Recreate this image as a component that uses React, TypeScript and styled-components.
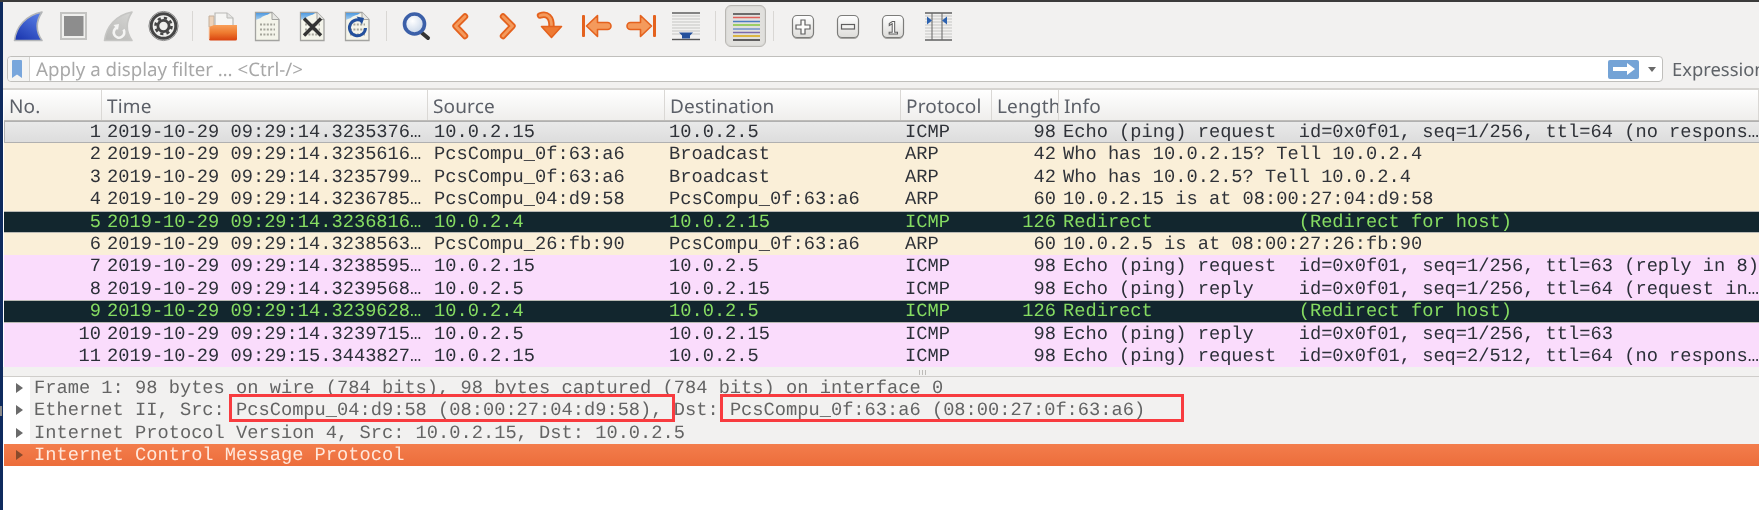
import React from 'react';
import styled, { createGlobalStyle } from 'styled-components';

const GlobalStyle = createGlobalStyle`
  html, body {
    margin: 0;
    padding: 0;
    background: #fff;
  }
  * {
    box-sizing: border-box;
  }
`;

type RowKind = 'selected' | 'arp' | 'redirect' | 'icmp';

interface PacketRow {
  no: number;
  time: string;
  source: string;
  destination: string;
  protocol: string;
  length: number;
  info: string;
  kind: RowKind;
}

const packets: PacketRow[] = [
  { no: 1, time: '2019-10-29 09:29:14.3235376…', source: '10.0.2.15', destination: '10.0.2.5', protocol: 'ICMP', length: 98, info: 'Echo (ping) request  id=0x0f01, seq=1/256, ttl=64 (no respons…', kind: 'selected' },
  { no: 2, time: '2019-10-29 09:29:14.3235616…', source: 'PcsCompu_0f:63:a6', destination: 'Broadcast', protocol: 'ARP', length: 42, info: 'Who has 10.0.2.15? Tell 10.0.2.4', kind: 'arp' },
  { no: 3, time: '2019-10-29 09:29:14.3235799…', source: 'PcsCompu_0f:63:a6', destination: 'Broadcast', protocol: 'ARP', length: 42, info: 'Who has 10.0.2.5? Tell 10.0.2.4', kind: 'arp' },
  { no: 4, time: '2019-10-29 09:29:14.3236785…', source: 'PcsCompu_04:d9:58', destination: 'PcsCompu_0f:63:a6', protocol: 'ARP', length: 60, info: '10.0.2.15 is at 08:00:27:04:d9:58', kind: 'arp' },
  { no: 5, time: '2019-10-29 09:29:14.3236816…', source: '10.0.2.4', destination: '10.0.2.15', protocol: 'ICMP', length: 126, info: 'Redirect             (Redirect for host)', kind: 'redirect' },
  { no: 6, time: '2019-10-29 09:29:14.3238563…', source: 'PcsCompu_26:fb:90', destination: 'PcsCompu_0f:63:a6', protocol: 'ARP', length: 60, info: '10.0.2.5 is at 08:00:27:26:fb:90', kind: 'arp' },
  { no: 7, time: '2019-10-29 09:29:14.3238595…', source: '10.0.2.15', destination: '10.0.2.5', protocol: 'ICMP', length: 98, info: 'Echo (ping) request  id=0x0f01, seq=1/256, ttl=63 (reply in 8)', kind: 'icmp' },
  { no: 8, time: '2019-10-29 09:29:14.3239568…', source: '10.0.2.5', destination: '10.0.2.15', protocol: 'ICMP', length: 98, info: 'Echo (ping) reply    id=0x0f01, seq=1/256, ttl=64 (request in…', kind: 'icmp' },
  { no: 9, time: '2019-10-29 09:29:14.3239628…', source: '10.0.2.4', destination: '10.0.2.5', protocol: 'ICMP', length: 126, info: 'Redirect             (Redirect for host)', kind: 'redirect' },
  { no: 10, time: '2019-10-29 09:29:14.3239715…', source: '10.0.2.5', destination: '10.0.2.15', protocol: 'ICMP', length: 98, info: 'Echo (ping) reply    id=0x0f01, seq=1/256, ttl=63', kind: 'icmp' },
  { no: 11, time: '2019-10-29 09:29:15.3443827…', source: '10.0.2.15', destination: '10.0.2.5', protocol: 'ICMP', length: 98, info: 'Echo (ping) request  id=0x0f01, seq=2/512, ttl=64 (no respons…', kind: 'icmp' },
];

const Icon = ({ children }: { children: React.ReactNode }) => (
  <svg width="45" height="46" viewBox="0 0 45 46">{children}</svg>
);

const Fin = ({ id, top, bottom, edge }: { id: string; top: string; bottom: string; edge: string }) => (
  <>
    <defs>
      <linearGradient id={id} x1="0.8" y1="0" x2="0.2" y2="1">
        <stop offset="0" stopColor={top} />
        <stop offset="1" stopColor={bottom} />
      </linearGradient>
    </defs>
    <path d="M8.5 37.5C10 24 20 12 36 9C30 18 29.5 28 36 37.5Z" fill={`url(#${id})`} stroke={edge} strokeWidth="1.6" strokeLinejoin="round" />
  </>
);

const StartIcon = () => (
  <Icon>
    <Fin id="finBlue" top="#5a7fe6" bottom="#1c38b0" edge="#b4b6b8" />
  </Icon>
);

const StopIcon = () => (
  <Icon>
    <rect x="10" y="10" width="25" height="26" fill="#efefed" stroke="#c3c3c1" strokeWidth="2" />
    <rect x="13" y="13" width="19.5" height="20" fill="#8d8d8d" />
  </Icon>
);

const RestartIcon = () => (
  <Icon>
    <Fin id="finGrey" top="#d4d4d2" bottom="#b9b9b7" edge="#c6c6c4" />
    <path d="M27.5 26.5a5.3 5.3 0 1 1-6.5-2" fill="none" stroke="#f4f4f3" strokeWidth="2.6" />
    <path d="M17.5 22l5.5-1-1 6z" fill="#f4f4f3" />
  </Icon>
);

const GearIcon = () => (
  <Icon>
    <circle cx="22.5" cy="23" r="14.6" fill="#efefed" stroke="#8c8c8c" strokeWidth="1" />
    <circle cx="22.5" cy="23" r="12.3" fill="none" stroke="#454545" strokeWidth="3" />
    <circle cx="22.5" cy="23" r="8" fill="none" stroke="#454545" strokeWidth="2.6" strokeDasharray="3.2 3.1" />
    <circle cx="22.5" cy="23" r="5.6" fill="none" stroke="#454545" strokeWidth="2.8" />
  </Icon>
);

const OpenIcon = () => (
  <Icon>
    <defs>
      <linearGradient id="folderFill" x1="0" y1="0" x2="0" y2="1">
        <stop offset="0" stopColor="#f9a05a" />
        <stop offset="0.5" stopColor="#ee7a2f" />
        <stop offset="1" stopColor="#d9420f" />
      </linearGradient>
    </defs>
    <path d="M9 13h5v11H9z" fill="#edd3ba" stroke="#c5b09c" strokeWidth="1" />
    <path d="M15 10h12l6 5v13H15z" fill="#f6f6f4" stroke="#b9b9b6" strokeWidth="1.2" />
    <path d="M27 10v5h6" fill="#e4e4e2" stroke="#b9b9b6" strokeWidth="1" />
    <path d="M9 24l5-2h23v14a1.5 1.5 0 0 1-1.5 1.5H10.5A1.5 1.5 0 0 1 9 36z" fill="url(#folderFill)" />
    <path d="M9 24v12" stroke="#f7d7c0" strokeWidth="1" />
  </Icon>
);

const FileBase = ({ id }: { id: string }) => (
  <>
    <defs>
      <linearGradient id={id} x1="0" y1="0" x2="0" y2="1">
        <stop offset="0" stopColor="#4f9ae0" />
        <stop offset="1" stopColor="#a9d0ee" />
      </linearGradient>
    </defs>
    <path d="M10.5 9.5H27l7 7v21H10.5z" fill="#f4f4ea" stroke="#a3a3a0" strokeWidth="1.3" />
    <path d="M11 10h14c-3 3-7 2-9 5-2 1-4 1-5 2z" fill={`url(#${id})`} />
    <path d="M27 9.5v7h7" fill="#e8e8e4" stroke="#a3a3a0" strokeWidth="1" />
    <g stroke="#a4a49a" strokeWidth="2" strokeDasharray="2 1.4">
      <line x1="15" y1="21.5" x2="30" y2="21.5" />
      <line x1="15" y1="26.5" x2="30" y2="26.5" />
      <line x1="15" y1="31.5" x2="30" y2="31.5" />
    </g>
  </>
);

const FileIcon = () => (
  <Icon>
    <FileBase id="fileA" />
  </Icon>
);

const CloseIcon = () => (
  <Icon>
    <FileBase id="fileB" />
    <path d="M14 15.5L31 32.5M31 15.5L14 32.5" stroke="#333" strokeWidth="3.4" />
  </Icon>
);

const ReloadIcon = () => (
  <Icon>
    <FileBase id="fileC" />
    <path d="M27.5 18.5a8 8 0 1 0 3 6.5" fill="none" stroke="#23509c" strokeWidth="3" />
    <path d="M21.5 13.5l7.5 1.5-2 6.5z" fill="#23509c" />
  </Icon>
);

const SearchIcon = () => (
  <Icon>
    <defs>
      <radialGradient id="lensFill" cx="0.4" cy="0.35" r="0.7">
        <stop offset="0" stopColor="#ffffff" />
        <stop offset="1" stopColor="#c3d2e6" />
      </radialGradient>
    </defs>
    <line x1="28" y1="30" x2="34" y2="35" stroke="#333" strokeWidth="4" strokeLinecap="round" />
    <circle cx="20.5" cy="21" r="10" fill="url(#lensFill)" stroke="#3b5fa8" strokeWidth="3.6" />
  </Icon>
);

const orangeEdge = '#e4621e';
const orangeFill = '#f49a5c';

const ChevronIcon = ({ points }: { points: string }) => (
  <Icon>
    <polyline points={points} fill="none" stroke={orangeEdge} strokeWidth="6.4" strokeLinecap="round" strokeLinejoin="round" />
    <polyline points={points} fill="none" stroke={orangeFill} strokeWidth="2.8" strokeLinecap="round" strokeLinejoin="round" />
  </Icon>
);

const GoIcon = () => (
  <Icon>
    <path d="M11 12.5C18 10 23 14 22.5 24" fill="none" stroke={orangeEdge} strokeWidth="6.4" strokeLinecap="round" />
    <path d="M11 12.5C18 10 23 14 22.5 24" fill="none" stroke={orangeFill} strokeWidth="2.8" strokeLinecap="round" />
    <path d="M12.5 23.5h20L22.5 34.5z" fill="#ee7a33" stroke={orangeEdge} strokeWidth="1.6" strokeLinejoin="round" />
  </Icon>
);

const FirstIcon = () => (
  <Icon>
    <rect x="8" y="12" width="3" height="22" rx="1" fill={orangeEdge} />
    <path d="M12.5 23l11-10.5v7h10a3.5 3.5 0 0 1 0 7h-10v7z" fill={orangeFill} stroke={orangeEdge} strokeWidth="1.6" strokeLinejoin="round" />
  </Icon>
);

const LastIcon = () => (
  <Icon>
    <rect x="34" y="12" width="3" height="22" rx="1" fill={orangeEdge} />
    <path d="M32.5 23l-11-10.5v7h-10a3.5 3.5 0 0 0 0 7h10v7z" fill={orangeFill} stroke={orangeEdge} strokeWidth="1.6" strokeLinejoin="round" />
  </Icon>
);

const AutoScrollIcon = () => (
  <Icon>
    <g stroke="#c5c5c3" strokeWidth="1">
      {[13, 16, 19, 22, 25, 28, 31].map((y) => <line key={y} x1="8" y1={y} x2="36" y2={y} />)}
    </g>
    <line x1="8" y1="10" x2="36" y2="10" stroke="#555" strokeWidth="1.4" />
    <line x1="8" y1="36.5" x2="36" y2="36.5" stroke="#555" strokeWidth="1.4" />
    <path d="M15 29.5h14l-3 3v3h-8v-3z" fill="#23509c" />
  </Icon>
);

const colorLines = [
  ['#444', 9], ['#e0605a', 12.5], ['#4a7cc0', 16.5], ['#84c83c', 20],
  ['#6f93c8', 24], ['#7a6aaa', 27.5], ['#d8a810', 31], ['#333', 35],
] as const;

const ColorizeIcon = () => (
  <svg width="41" height="42" viewBox="0 0 41 42">
    {colorLines.map(([color, y]) => <line key={y} x1="8" y1={y} x2="35" y2={y} stroke={color} strokeWidth="1.5" />)}
  </svg>
);

const KeyCap = ({ children }: { children: React.ReactNode }) => (
  <Icon>
    <defs>
      <linearGradient id="capFill" x1="0" y1="0" x2="0" y2="1">
        <stop offset="0" stopColor="#ffffff" />
        <stop offset="1" stopColor="#dddcd9" />
      </linearGradient>
    </defs>
    <rect x="11.5" y="14" width="21" height="22" rx="4.5" fill="#a5a4a1" />
    <rect x="11.5" y="12.5" width="21" height="22" rx="4.5" fill="url(#capFill)" stroke="#7c7c7a" strokeWidth="1.2" />
    {children}
  </Icon>
);

const ZoomInIcon = () => (
  <KeyCap>
    <path d="M20 17h4v5h5v4h-5v5h-4v-5h-5v-4h5z" fill="#fcfcfb" stroke="#5f5f5f" strokeWidth="1.2" />
  </KeyCap>
);

const ZoomOutIcon = () => (
  <KeyCap>
    <rect x="15.5" y="21.5" width="13" height="4.5" fill="#f4f4f2" stroke="#5f5f5f" strokeWidth="1.2" />
  </KeyCap>
);

const ZoomResetIcon = () => (
  <KeyCap>
    <text x="22" y="31" textAnchor="middle" fontFamily="Liberation Sans, sans-serif" fontSize="18" fontWeight="700" fill="#fcfcfb" stroke="#5f5f5f" strokeWidth="1">1</text>
  </KeyCap>
);

const ResizeIcon = () => (
  <Icon>
    <g stroke="#c5c5c3" strokeWidth="1">
      {[13, 16, 19, 22, 25, 28, 31, 34].map((y) => <line key={y} x1="9" y1={y} x2="36" y2={y} />)}
    </g>
    <line x1="9" y1="10" x2="36" y2="10" stroke="#555" strokeWidth="1.4" />
    <line x1="9" y1="37" x2="36" y2="37" stroke="#555" strokeWidth="1.4" />
    <line x1="16" y1="10" x2="16" y2="37" stroke="#666" strokeWidth="1" />
    <line x1="26" y1="10" x2="26" y2="37" stroke="#666" strokeWidth="1" />
    <path d="M11 13.5l5 4-5 4zM31 13.5l-5 4 5 4z" fill="#2c62b0" />
  </Icon>
);

export default function App() {
  return (
    <Page>
      <GlobalStyle />
      <TopEdge />
      <Body>
        <LeftEdge />
        <Main>
          <Toolbar>
            <ToolButton><StartIcon /></ToolButton>
            <ToolButton><StopIcon /></ToolButton>
            <ToolButton><RestartIcon /></ToolButton>
            <ToolButton><GearIcon /></ToolButton>
            <Separator />
            <ToolButton><OpenIcon /></ToolButton>
            <ToolButton><FileIcon /></ToolButton>
            <ToolButton><CloseIcon /></ToolButton>
            <ToolButton><ReloadIcon /></ToolButton>
            <Separator />
            <ToolButton><SearchIcon /></ToolButton>
            <ToolButton><ChevronIcon points="26,13.5 16.5,23 26,33" /></ToolButton>
            <ToolButton><ChevronIcon points="19,13.5 28.5,23 19,33" /></ToolButton>
            <ToolButton><GoIcon /></ToolButton>
            <ToolButton><FirstIcon /></ToolButton>
            <ToolButton><LastIcon /></ToolButton>
            <ToolButton><AutoScrollIcon /></ToolButton>
            <Separator />
            <PressedButton><ColorizeIcon /></PressedButton>
            <Separator $narrow />
            <ToolButton><ZoomInIcon /></ToolButton>
            <ToolButton><ZoomOutIcon /></ToolButton>
            <ToolButton><ZoomResetIcon /></ToolButton>
            <ToolButton><ResizeIcon /></ToolButton>
          </Toolbar>

          <FilterRow>
            <FilterInput>
              <BookmarkCell>
                <svg width="10" height="18" viewBox="0 0 10 18">
                  <path d="M0 1a1 1 0 0 1 1-1h8a1 1 0 0 1 1 1v17l-5-3.5L0 18z" fill="#78a6dc" />
                </svg>
              </BookmarkCell>
              <Placeholder>Apply a display filter … &lt;Ctrl-/&gt;</Placeholder>
              <ApplyButton>
                <svg width="22" height="12" viewBox="0 0 22 12">
                  <path d="M0 4h14V0l8 6-8 6V8H0z" fill="#fff" />
                </svg>
              </ApplyButton>
              <DropArrow />
            </FilterInput>
            <ExpressionLabel>Expression…</ExpressionLabel>
          </FilterRow>

          <HeaderRow>
            <HeaderCell>No.</HeaderCell>
            <HeaderCell>Time</HeaderCell>
            <HeaderCell>Source</HeaderCell>
            <HeaderCell>Destination</HeaderCell>
            <HeaderCell>Protocol</HeaderCell>
            <HeaderCell>Length</HeaderCell>
            <HeaderCell>Info</HeaderCell>
          </HeaderRow>

          {packets.map((p) => (
            <Row key={p.no} $kind={p.kind}>
              <NumberCell $pad={1}>{p.no}</NumberCell>
              <Cell $pad={5}>{p.time}</Cell>
              <Cell $pad={6}>{p.source}</Cell>
              <Cell>{p.destination}</Cell>
              <Cell>{p.protocol}</Cell>
              <NumberCell $pad={3}>{p.length}</NumberCell>
              <Cell>{p.info}</Cell>
            </Row>
          ))}

          <Splitter><SplitterGrip /></Splitter>

          <TreeRow>
            <Expander />
            <TreeText>Frame 1: 98 bytes on wire (784 bits), 98 bytes captured (784 bits) on interface 0</TreeText>
          </TreeRow>
          <TreeRow>
            <Expander />
            <TreeText>
              Ethernet II, Src: <Marked $left={7} $right={12}>PcsCompu_04:d9:58 (08:00:27:04:d9:58),</Marked> Dst: <Marked $left={10} $right={39}>PcsCompu_0f:63:a6 (08:00:27:0f:63:a6)</Marked>
            </TreeText>
          </TreeRow>
          <TreeRow>
            <Expander />
            <TreeText>Internet Protocol Version 4, Src: 10.0.2.15, Dst: 10.0.2.5</TreeText>
          </TreeRow>
          <TreeRow $active>
            <Expander $active />
            <TreeText $active>Internet Control Message Protocol</TreeText>
          </TreeRow>
        </Main>
      </Body>
    </Page>
  );
}

const Page = styled.div`
  width: 1759px;
  height: 510px;
  overflow: hidden;
  display: flex;
  flex-direction: column;
  background: #fff;
  filter: blur(0.5px);
  text-rendering: geometricPrecision;
`;

const TopEdge = styled.div`
  height: 2px;
  flex: none;
  background: #3b3b3b;
`;

const Body = styled.div`
  flex: 1;
  display: flex;
  min-height: 0;
`;

const LeftEdge = styled.div`
  position: relative;
  width: 3px;
  flex: none;
  background: #0e2a5e;
  &::after {
    content: '';
    position: absolute;
    left: 0;
    top: 404px;
    width: 2px;
    height: 10px;
    background: #8a8a8a;
  }
`;

const Main = styled.div`
  flex: 1;
  min-width: 0;
  display: flex;
  flex-direction: column;
`;

const Toolbar = styled.div`
  height: 54px;
  flex: none;
  display: flex;
  align-items: flex-start;
  padding: 1px 0 0 3px;
  background: #f2f1f0;
`;

const ToolButton = styled.div`
  width: 45px;
  height: 46px;
  flex: none;
`;

const PressedButton = styled.div`
  width: 41px;
  height: 42px;
  margin: 2px 2px 0;
  flex: none;
  border: 1px solid #b9b7b3;
  border-radius: 6px;
  background: #e1e0dd;
  box-shadow: inset 0 0 2px rgba(0, 0, 0, 0.12);
  svg {
    display: block;
    margin: -1px;
  }
`;

const Separator = styled.div<{ $narrow?: boolean }>`
  width: ${(p) => (p.$narrow ? 13 : 14)}px;
  height: 30px;
  margin-top: 8px;
  flex: none;
  position: relative;
  &::after {
    content: '';
    display: block;
    width: 1px;
    height: 100%;
    margin-left: ${(p) => (p.$narrow ? 5 : 6)}px;
    background: #d9d7d4;
  }
`;

const FilterRow = styled.div`
  height: 34px;
  flex: none;
  display: flex;
  align-items: flex-start;
  padding-left: 4px;
  background: #f2f1f0;
  border-bottom: 2px solid #d6d4d1;
`;

const FilterInput = styled.div`
  width: 1656px;
  height: 26px;
  flex: none;
  display: flex;
  align-items: center;
  background: #fff;
  border: 1px solid #c0bfbc;
  border-radius: 4px;
`;

const BookmarkCell = styled.div`
  width: 22px;
  height: 100%;
  flex: none;
  display: flex;
  align-items: center;
  padding-left: 4px;
  background: #f4f4f3;
  border-right: 1px solid #d4d3d0;
  border-radius: 4px 0 0 4px;
`;

const Placeholder = styled.div`
  flex: 1;
  padding: 1px 0 0 6px;
  font: 18.7px 'Noto Sans', sans-serif;
  color: #a8a8a8;
  white-space: nowrap;
`;

const ApplyButton = styled.div`
  width: 31px;
  height: 19px;
  flex: none;
  display: flex;
  align-items: center;
  justify-content: center;
  background: #74a3d6;
  border-radius: 2px;
`;

const DropArrow = styled.div`
  width: 0;
  height: 0;
  flex: none;
  margin: 0 6px 0 9px;
  border-left: 4px solid transparent;
  border-right: 4px solid transparent;
  border-top: 5px solid #6a6a6a;
`;

const ExpressionLabel = styled.div`
  margin-left: 9px;
  font: 18.4px/27px 'Noto Sans', sans-serif;
  color: #5f6368;
  white-space: nowrap;
`;

const columns = '98px 326px 237px 236px 91px 67px 1fr';

const HeaderRow = styled.div`
  height: 31px;
  flex: none;
  margin-left: 1px;
  display: grid;
  grid-template-columns: ${columns};
  background: linear-gradient(#ffffff, #efeeec);
  border-bottom: 1px solid #bdbbb8;
`;

const HeaderCell = styled.div`
  display: flex;
  align-items: center;
  padding: 2px 0 0 5px;
  overflow: hidden;
  white-space: nowrap;
  font: 19px 'Noto Sans', sans-serif;
  letter-spacing: 0.15px;
  color: #5c6068;
  border-right: 1px solid #dad8d5;
`;

const rowColors: Record<RowKind, { bg: string; fg: string; line: string; side: string }> = {
  selected: { bg: 'linear-gradient(#e9e9e9, #dddddd)', fg: '#2f3238', line: '#b0b0b0', side: '#b0b0b0' },
  arp: { bg: '#faefd8', fg: '#2f3238', line: 'transparent', side: 'transparent' },
  redirect: { bg: '#12262e', fg: '#86dc62', line: '#b9b9b4', side: 'transparent' },
  icmp: { bg: '#fadcfc', fg: '#2b2f38', line: 'transparent', side: 'transparent' },
};

const Row = styled.div<{ $kind: RowKind }>`
  height: 22.4px;
  flex: none;
  margin-left: 1px;
  display: grid;
  grid-template-columns: ${columns};
  background: ${(p) => rowColors[p.$kind].bg};
  color: ${(p) => rowColors[p.$kind].fg};
  border-top: 1px solid ${(p) => rowColors[p.$kind].line};
  border-bottom: 1px solid ${(p) => rowColors[p.$kind].line};
  box-shadow: inset 1px 0 0 ${(p) => rowColors[p.$kind].side};
  font: 18.72px/20.4px 'Liberation Mono', monospace;
  overflow: hidden;
`;

const Cell = styled.div<{ $pad?: number }>`
  padding-left: ${(p) => p.$pad ?? 4}px;
  white-space: pre;
  overflow: hidden;
`;

const NumberCell = styled.div<{ $pad: number }>`
  padding-right: ${(p) => p.$pad}px;
  text-align: right;
  white-space: pre;
`;

const Splitter = styled.div`
  height: 9.6px;
  flex: none;
  display: flex;
  justify-content: center;
  padding-top: 3px;
  background: #f2f1f0;
  border-bottom: 1px solid #cfcdca;
`;

const SplitterGrip = styled.div`
  width: 7px;
  height: 5px;
  margin-left: 82px;
  background: repeating-linear-gradient(90deg, #bdbbb8 0 1px, transparent 1px 3px);
`;

const TreeRow = styled.div<{ $active?: boolean }>`
  height: 22.4px;
  flex: none;
  margin-left: 1px;
  display: flex;
  align-items: center;
  background: ${(p) => (p.$active ? 'linear-gradient(#f37d4c, #ec6d3b)' : '#fff')};
`;

const Expander = styled.div<{ $active?: boolean }>`
  width: 0;
  height: 0;
  flex: none;
  margin: 0 7px 0 12px;
  border-top: 5px solid transparent;
  border-bottom: 5px solid transparent;
  border-left: 7px solid ${(p) => (p.$active ? '#8a4a2c' : '#6a6a6a')};
`;

const TreeText = styled.div<{ $active?: boolean }>`
  flex: 1;
  height: 100%;
  padding-left: 4px;
  background: ${(p) => (p.$active ? 'transparent' : '#f2f1f0')};
  color: ${(p) => (p.$active ? '#ffe8dc' : '#646464')};
  font: 18.72px/22.4px 'Liberation Mono', monospace;
  white-space: pre;
`;

const Marked = styled.span<{ $left: number; $right: number }>`
  position: relative;
  &::after {
    content: '';
    position: absolute;
    z-index: 1;
    left: -${(p) => p.$left}px;
    right: -${(p) => p.$right}px;
    top: -5px;
    bottom: -1px;
    border: 3px solid #f83b3f;
  }
`;
